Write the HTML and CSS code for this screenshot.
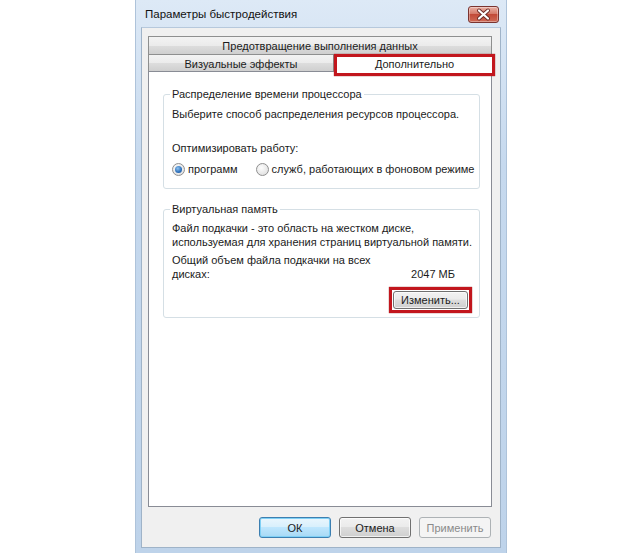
FILE: index.html
```html
<!DOCTYPE html>
<html lang="ru">
<head>
  <meta charset="UTF-8">
  <title>Параметры быстродействия</title>
  <link rel="stylesheet" href="styles.css">
</head>
<body>
  <div class="window">
    <div class="titlebar">
      <span class="title">Параметры быстродействия</span>
      <button class="close" aria-label="Закрыть">
        <svg width="31" height="17" viewBox="0 0 31 17">
          <path d="M11 4.5 L20 12.5 M20 4.5 L11 12.5" stroke="#6a2a26" stroke-width="4" stroke-linecap="round"/>
          <path d="M11 4.5 L20 12.5 M20 4.5 L11 12.5" stroke="#fff" stroke-width="2.2" stroke-linecap="round"/>
        </svg>
      </button>
    </div>

    <div class="client">
      <!-- вкладки -->
      <div class="tabs">
        <div class="tab-row">
          <div class="tab">Предотвращение выполнения данных</div>
        </div>
        <div class="tab-row">
          <div class="tab first">Визуальные эффекты</div>
          <div class="tab active">Дополнительно</div>
        </div>
      </div>

      <div class="panel">
        <fieldset class="group cpu">
          <legend>Распределение времени процессора</legend>
          <p class="line">Выберите способ распределения ресурсов процессора.</p>
          <p class="line optimize">Оптимизировать работу:</p>
          <div class="radios">
            <label class="radio"><span class="dot checked"></span>программ</label>
            <label class="radio"><span class="dot"></span>служб, работающих в фоновом режиме</label>
          </div>
        </fieldset>

        <fieldset class="group memory">
          <legend>Виртуальная память</legend>
          <p class="line">Файл подкачки - это область на жестком диске,<br>используемая для хранения страниц виртуальной памяти.</p>
          <div class="total">
            <span class="total-label">Общий объем файла подкачки на всех<br>дисках:</span>
            <span class="total-value">2047 МБ</span>
          </div>
          <div class="change-row">
            <span class="mark"><button class="btn change">Изменить...</button></span>
          </div>
        </fieldset>
      </div>

      <div class="actions">
        <button class="btn default">ОК</button>
        <button class="btn">Отмена</button>
        <button class="btn" disabled>Применить</button>
      </div>
    </div>
  </div>
</body>
</html>
```

FILE: styles.css
```css
body { margin: 0; background: #fff; font-family: "Liberation Sans", Arial, sans-serif; font-size: 11px; color: #1b1b1b; }

.window { width: 372px; height: 553px; margin-left: 135px; box-sizing: border-box; padding: 0 5px 5px; display: flex; flex-direction: column; background: linear-gradient(#dde9f6, #c6d9ee 30%, #bed3ea); border-left: 1px solid #aec3da; border-right: 1px solid #aec3da; }

.titlebar { height: 27px; display: flex; justify-content: space-between; align-items: flex-start; }
.title { font-size: 11.5px; padding: 8px 0 0 4px; color: #111; }
.close { width: 31px; height: 17px; margin: 6px 2px 0 0; padding: 0; border: 1px solid #7a3430; border-radius: 3px; background: linear-gradient(#eab1a5, #d57a69 45%, #c24a38 50%, #cf6a55); box-shadow: inset 0 0 0 1px rgba(255,255,255,0.35); display: flex; }
.close svg { margin: -1px; }

.client { flex: 1; display: flex; flex-direction: column; background: #f0f0f0; padding: 8px 8px 9px 6px; border: 1px solid #9fb3c8; border-top-color: #b6c8dc; }

.tabs { display: flex; flex-direction: column; }
.tab-row { display: flex; height: 18px; }
.tab-row + .tab-row { height: 17px; }
.tab { flex: 1; box-sizing: border-box; text-align: center; line-height: 18px; white-space: nowrap; border: 1px solid #8e8f8f; border-bottom: none; background: linear-gradient(#f3f3f3, #ebebeb 50%, #dddddd 51%, #cfcfcf); }
.tab.first { flex: none; width: 186px; }
.tab.active { flex: none; width: 161px; height: 22px; line-height: 14px; margin-bottom: -5px; position: relative; z-index: 1; background: #fff; border: 3px solid #c2161d; box-shadow: 0 0 1px #8a1a1a; }

.panel { flex: 1; background: #fff; border: 1px solid #898c95; padding: 15px 11px 0 14px; }

.group { margin: 0; border: 1px solid #d5dfe5; border-radius: 3px; padding: 0 8px 12px; min-width: 0; }
.group legend { padding: 0 2px; margin-left: -2px; line-height: 14px; white-space: nowrap; }
.group.memory { margin-top: 13px; padding-bottom: 4px; }

.line { margin: 6px 0 0; line-height: 14px; white-space: nowrap; }
.memory .line { margin-top: 5px; }
.line.optimize { margin-top: 20px; }

.radios { display: flex; gap: 18px; margin-top: 7px; line-height: 14px; white-space: nowrap; }
.radio { display: inline-flex; align-items: center; gap: 3px; }
.dot { width: 13px; height: 13px; box-sizing: border-box; border-radius: 50%; border: 1px solid #8f8f8f; background: radial-gradient(circle at 40% 35%, #fdfdfd, #e4e4e4 70%, #d0d0d0); display: flex; align-items: center; justify-content: center; }
.dot.checked::after { content: ""; width: 7px; height: 7px; border-radius: 50%; background: radial-gradient(circle at 40% 35%, #8fc3f0, #2c6fba 60%, #1b4f92); }

.total { display: flex; justify-content: space-between; align-items: flex-end; margin-top: 4px; line-height: 14px; white-space: nowrap; }
.total-value { margin-right: 16px; }

.change-row { display: flex; justify-content: flex-end; margin-top: 6px; margin-right: -1px; }
.mark { border: 3px solid #c2161d; padding: 1px; display: flex; box-shadow: 0 0 1px #8a1a1a; }

.btn { width: 72px; height: 21px; padding: 0; font: inherit; color: #1b1b1b; border: 1px solid #707070; border-radius: 3px; background: linear-gradient(#f2f2f2, #ebebeb 45%, #dddddd 50%, #cfcfcf); box-shadow: inset 0 0 0 1px rgba(255,255,255,0.7); }
.btn.change { width: 75px; height: 18px; }
.btn.default { border-color: #3c7fb1; background: linear-gradient(#eaf6fd, #d9f0fc 45%, #bee6fd 50%, #a7d9f5); box-shadow: inset 0 0 0 1px #7fd0f5; }
.btn:disabled { color: #8a8a8a; border-color: #adb2b5; background: #f4f4f4; box-shadow: none; }

.actions { display: flex; justify-content: flex-end; gap: 8px; margin: 10px 1px 0 0; }
```
